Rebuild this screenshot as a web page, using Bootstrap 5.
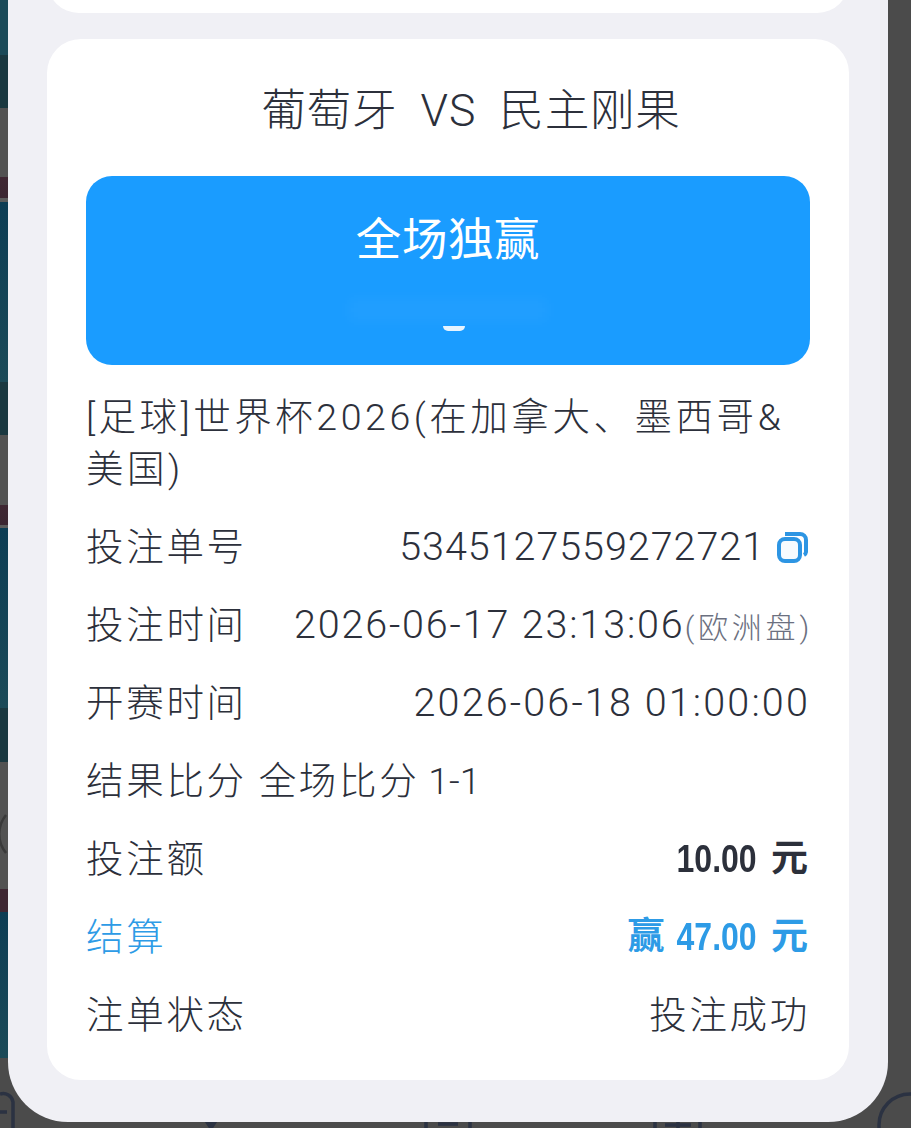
<!DOCTYPE html>
<html lang="zh-CN">
<head>
  <meta charset="UTF-8" />
  <meta name="viewport" content="width=device-width, initial-scale=1" />
  <title>注单详情</title>
  <link href="https://cdn.jsdelivr.net/npm/bootstrap@5.3.0/dist/css/bootstrap.min.css" rel="stylesheet" />
  <style>
    html, body {
      height: 100%;
      margin: 0;
      overflow: hidden;
    }
    body {
      width: 911px;
      height: 1128px;
      font-family: Roboto, "Noto Sans CJK SC", sans-serif;
      font-weight: 300;
      color: #2c303b;
      background: #4b4b4b;
    }
    .screen {
      height: 1128px;
      position: relative;
      background: #4b4b4b linear-gradient(to bottom,
        #1b4a58 0, #1b4a58 55px, #1a3840 55px, #1a3840 108px, #525252 108px, #525252 177px,
        #3f2733 177px, #3b2631 198px, #5c5c5c 198px, #5c5c5c 202px, #0d3d54 202px, #1b4a58 382px, #1a3840 382px, #1a3840 435px,
        #525252 435px, #525252 505px, #3f2733 505px, #3b2631 525px, #5c5c5c 525px, #5c5c5c 528px, #0d3d54 528px, #1b4a58 708px,
        #1a3840 708px, #1a3840 762px, #525252 762px, #525252 889px, #3f2733 889px, #3f2733 912px,
        #0d3d54 912px, #1b4a58 1058px, #4b4b4b 1058px) no-repeat left top / 8px 100%;
    }
    .under-layer {
      position: absolute;
      inset: 0;
    }
    .sheet {
      position: absolute;
      left: 8px;
      top: -60px;
      width: 880px;
      height: 1182px;
      background: #f0f0f5;
      border-radius: 0 0 60px 60px;
      padding: 0 39px;
    }
    .prev-slip {
      height: 73px;
      background: #fff;
      border-radius: 0 0 32px 32px;
    }
    .slip {
      margin-top: 26px;
      height: 1041px;
      background: #fff;
      border-radius: 34px;
      padding: 0 39px;
    }
    .match-title {
      height: 137px;
      padding: 8px 0 0 46px;
      font-size: 44.5px;
      letter-spacing: .8px;
    }
    .result-box {
      height: 189px;
      background: #1a9cff;
      border-radius: 26px;
      color: #fff;
      font-size: 45.5px;
      font-weight: 400;
      letter-spacing: .6px;
      padding-top: 31px;
      position: relative;
    }
    .blur-smudge {
      position: absolute;
      left: 262px;
      top: 122px;
      width: 200px;
      height: 24px;
      background: rgba(255, 255, 255, .03);
      filter: blur(7px);
    }
    .blur-spot {
      position: absolute;
      left: 357px;
      top: 150px;
      width: 22px;
      height: 5px;
      background: #e6f4ff;
      border-radius: 0 0 11px 11px;
      filter: blur(.6px);
    }
    .league {
      font-size: 37.5px;
      line-height: 52px;
      letter-spacing: 3.55px;
      margin-top: 26px;
      margin-bottom: 13px;
    }
    .info-row {
      height: 78px;
      font-size: 37.5px;
      letter-spacing: 2.7px;
    }
    .info-row .num {
      font-size: 39.5px;
      letter-spacing: .95px;
    }
    .info-row .stamp {
      font-size: 39.5px;
      letter-spacing: 1.85px;
    }
    .info-row .stamp-wide {
      font-size: 39.5px;
      letter-spacing: 2.15px;
    }
    .info-row .score {
      font-size: 37.5px;
      letter-spacing: 0;
      margin-left: -3px;
    }
    .note {
      font-size: 30px;
      letter-spacing: 3.8px;
      margin-right: -3px;
      color: #6b7080;
    }
    .money {
      font-family: "Liberation Sans", "Noto Sans CJK SC", sans-serif;
      font-weight: 700;
      font-size: 37px;
      letter-spacing: 0;
      display: flex;
      align-items: center;
      gap: 14px;
      margin-right: 2px;
    }
    .money-digits {
      display: inline-block;
      font-size: 39px;
      transform: scaleX(.82);
      transform-origin: right center;
      margin-left: -19px;
    }
    .won {
      color: #2d9be6;
    }
    .copy-icon {
      width: 31px;
      height: 31px;
      margin: 0 2px 0 12px;
    }
  </style>
</head>
<body>
  <div class="screen">
    <!-- icons of the page behind the sheet -->
    <svg class="under-layer" width="911" height="1128" viewBox="0 0 911 1128" fill="none" stroke="#2b3242" stroke-width="3.5">
      <path d="M0 1094a10 10 0 0 1 13 8v26M0 1112h7" />
      <path d="M207 1122l4 6 4-6z" fill="#2b3242" />
      <path d="M426 1122v6M470 1122v6M438 1124h20" />
      <path d="M655 1122v6M700 1122v6M678 1122v6M665 1125h26" />
      <circle cx="910" cy="1125" r="31" />
      <path d="M6 815a30 30 0 0 0 0 38" stroke="#3a3a3a" stroke-width="2.5" />
    </svg>
    <div class="sheet">
      <div class="prev-slip"></div>
      <div class="slip">
        <div class="match-title d-flex align-items-center justify-content-center">葡萄牙&nbsp;&nbsp;VS&nbsp;&nbsp;民主刚果</div>
        <div class="result-box text-center">
          全场独赢
          <span class="blur-smudge"></span>
          <span class="blur-spot"></span>
        </div>
        <div class="league">[足球]世界杯2026(在加拿大、墨西哥&amp;<br />美国)</div>
        <div class="info-row d-flex align-items-center justify-content-between">
          <span>投注单号</span>
          <span class="d-flex align-items-center">
            <span class="num">5345127559272721</span>
            <svg class="copy-icon" viewBox="0 0 31 31" fill="none" stroke="#2d95e3" stroke-width="4">
              <rect x="2" y="7" width="21" height="22" rx="6" fill="#f7fbfe" />
              <path d="M8 2h15a6 6 0 0 1 6 6v12a4 4 0 0 1-2 3" />
            </svg>
          </span>
        </div>
        <div class="info-row d-flex align-items-center justify-content-between text-nowrap">
          <span>投注时间</span>
          <span><span class="stamp">2026-06-17 23:13:06</span><span class="note">(欧洲盘)</span></span>
        </div>
        <div class="info-row d-flex align-items-center justify-content-between">
          <span>开赛时间</span>
          <span class="stamp-wide">2026-06-18 01:00:00</span>
        </div>
        <div class="info-row d-flex align-items-center">
          <span>结果比分 全场比分 <span class="score">1-1</span></span>
        </div>
        <div class="info-row d-flex align-items-center justify-content-between">
          <span>投注额</span>
          <span class="money"><span class="money-digits">10.00</span><span>元</span></span>
        </div>
        <div class="info-row won d-flex align-items-center justify-content-between">
          <span>结算</span>
          <span class="money"><span>赢</span><span class="money-digits">47.00</span><span>元</span></span>
        </div>
        <div class="info-row d-flex align-items-center justify-content-between">
          <span>注单状态</span>
          <span>投注成功</span>
        </div>
      </div>
    </div>
  </div>
  <script src="https://cdn.jsdelivr.net/npm/bootstrap@5.3.0/dist/js/bootstrap.bundle.min.js"></script>
</body>
</html>
